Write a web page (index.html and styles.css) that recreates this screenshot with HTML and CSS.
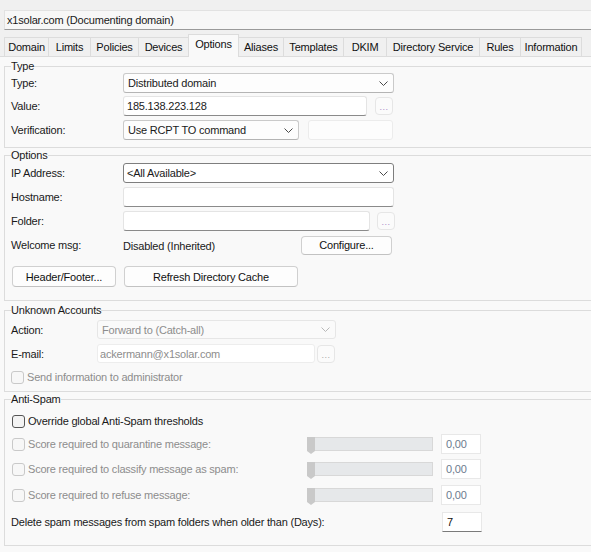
FILE: index.html
```html
<!DOCTYPE html>
<html lang="en">
<head>
    <meta charset="UTF-8">
    <meta name="viewport" content="width=device-width, initial-scale=1.0">
    <title>x1solar.com - Options</title>
    <link rel="stylesheet" href="styles.css">
</head>
<body>
    <div class="title">x1solar.com (Documenting domain)</div>

    <div class="tabs">
        <div class="tab t-domain">Domain</div>
        <div class="tab t-limits">Limits</div>
        <div class="tab t-policies">Policies</div>
        <div class="tab t-devices">Devices</div>
        <div class="tab t-options active">Options</div>
        <div class="tab t-aliases">Aliases</div>
        <div class="tab t-templates">Templates</div>
        <div class="tab t-dkim">DKIM</div>
        <div class="tab t-dir">Directory Service</div>
        <div class="tab t-rules">Rules</div>
        <div class="tab t-info last">Information</div>
    </div>

    <div class="panel">
        <!-- Type -->
        <fieldset class="group g-type">
            <legend>Type</legend>
            <div class="row">
                <span class="lbl">Type:</span>
                <div class="select w-271">
                    <span>Distributed domain</span>
                    <svg class="chev" width="9" height="5" viewBox="0 0 9 5"><polyline points="0.5,0.5 4.5,4.5 8.5,0.5"/></svg>
                </div>
            </div>
            <div class="row mt3">
                <span class="lbl">Value:</span>
                <div class="input w-244">185.138.223.128</div>
                <div class="dots ml8">...</div>
            </div>
            <div class="row mt4">
                <span class="lbl">Verification:</span>
                <div class="select w-176">
                    <span>Use RCPT TO command</span>
                    <svg class="chev" width="9" height="5" viewBox="0 0 9 5"><polyline points="0.5,0.5 4.5,4.5 8.5,0.5"/></svg>
                </div>
                <div class="input blank w-85 ml9"></div>
            </div>
        </fieldset>

        <!-- Options -->
        <fieldset class="group g-options">
            <legend>Options</legend>
            <div class="row">
                <span class="lbl">IP Address:</span>
                <div class="select focus w-271">
                    <span>&lt;All Available&gt;</span>
                    <svg class="chev" width="9" height="5" viewBox="0 0 9 5"><polyline points="0.5,0.5 4.5,4.5 8.5,0.5"/></svg>
                </div>
            </div>
            <div class="row mt4">
                <span class="lbl">Hostname:</span>
                <div class="input w-271"></div>
            </div>
            <div class="row mt4">
                <span class="lbl">Folder:</span>
                <div class="input w-247"></div>
                <div class="dots ml7">...</div>
            </div>
            <div class="row mt4">
                <span class="lbl">Welcome msg:</span>
                <span class="value">Disabled (Inherited)</span>
                <div class="btn b-configure">Configure...</div>
            </div>
            <div class="row buttons">
                <div class="btn b-header">Header/Footer...</div>
                <div class="btn b-refresh">Refresh Directory Cache</div>
            </div>
        </fieldset>

        <!-- Unknown Accounts -->
        <fieldset class="group g-unknown">
            <legend>Unknown Accounts</legend>
            <div class="row h19">
                <span class="lbl short">Action:</span>
                <div class="select disabled w-239">
                    <span>Forward to (Catch-all)</span>
                    <svg class="chev" width="9" height="5" viewBox="0 0 9 5"><polyline points="0.5,0.5 4.5,4.5 8.5,0.5"/></svg>
                </div>
            </div>
            <div class="row h19 mt5">
                <span class="lbl short">E-mail:</span>
                <div class="input disabled w-218">ackermann@x1solar.com</div>
                <div class="dots gray ml2">...</div>
            </div>
            <div class="row check mt6">
                <span class="cb"></span>
                <span class="dim">Send information to administrator</span>
            </div>
        </fieldset>

        <!-- Anti-Spam -->
        <fieldset class="group g-spam">
            <legend>Anti-Spam</legend>
            <div class="row check">
                <span class="cb on"></span>
                <span>Override global Anti-Spam thresholds</span>
            </div>
            <div class="row mt5">
                <div class="score">
                    <span class="cb"></span>
                    <span class="dim">Score required to quarantine message:</span>
                </div>
                <div class="track"><div class="thumb"></div></div>
                <div class="num">0,00</div>
            </div>
            <div class="row mt5">
                <div class="score">
                    <span class="cb"></span>
                    <span class="dim">Score required to classify message as spam:</span>
                </div>
                <div class="track"><div class="thumb"></div></div>
                <div class="num">0,00</div>
            </div>
            <div class="row mt6">
                <div class="score">
                    <span class="cb"></span>
                    <span class="dim">Score required to refuse message:</span>
                </div>
                <div class="track"><div class="thumb"></div></div>
                <div class="num">0,00</div>
            </div>
            <div class="row mt7">
                <span class="lbl long">Delete spam messages from spam folders when older than (Days):</span>
                <div class="num edit">7</div>
            </div>
        </fieldset>
    </div>
</body>
</html>
```

FILE: styles.css
```css
html, body {
    height: 100%;
    overflow: hidden;
}
body {
    margin: 0;
    background: #f0f0f0;
    font-family: "Liberation Sans", Arial, sans-serif;
    font-size: 11px;
    letter-spacing: -0.2px;
    color: #1a1a1a;
}

/* title box */
.title {
    margin: 10px 0 0 4px;
    height: 20px;
    box-sizing: border-box;
    padding-left: 2px;
    line-height: 18px;
    background: #f7f7f7;
    border: 1px solid #e2e2e2;
    border-right: none;
    border-bottom-color: #9a9a9a;
}

/* tabs */
.tabs {
    display: flex;
    align-items: flex-end;
    height: 21px;
    margin: 5px 0 0 4px;
}
.tab {
    box-sizing: border-box;
    height: 19px;
    line-height: 18px;
    text-align: center;
    border-top: 1px solid #dcdcdc;
    border-left: 1px solid #dcdcdc;
    background: #f0f0f0;
    color: #111;
}
.tab.last {
    border-right: 1px solid #dcdcdc;
}
.tab.active {
    height: 23px;
    line-height: 19px;
    padding-bottom: 3px;
    margin-bottom: -1px;
    border-right: 1px solid #dcdcdc;
    background: #f9f9f9;
    z-index: 1;
}
.tab.active + .tab {
    border-left: none;
}
.t-domain { width: 44px; }
.t-limits { width: 42px; }
.t-policies { width: 48px; }
.t-devices { width: 50px; }
.t-options { width: 51px; }
.t-aliases { width: 44px; }
.t-templates { width: 60px; }
.t-dkim { width: 43px; }
.t-dir { width: 93px; }
.t-rules { width: 41px; }
.t-info { width: 62px; }

/* page */
.panel {
    height: 496px;
    box-sizing: border-box;
    padding: 2px 0 0 4px;
    background: #f9f9f9;
    border-top: 1px solid #dcdcdc;
    overflow: hidden;
}
.group {
    width: 640px;
    margin: 0;
    padding: 0 0 7px 6px;
    border: 1px solid #dcdcdc;
    min-inline-size: 0;
}
.group legend {
    padding: 0;
    line-height: 14px;
    color: #1a1a1a;
}
.g-options { padding-top: 1px; padding-bottom: 13px; }
.g-unknown { margin-top: 2px; padding-top: 3px; padding-bottom: 6px; }
.g-spam { padding-top: 7px; padding-bottom: 13px; }

.row {
    display: flex;
    align-items: center;
    height: 20px;
}
.row.h19 { height: 19px; }
.row.check { height: 16px; }
.row.buttons { height: 21px; margin-top: 11px; }
.mt3 { margin-top: 3px; }
.mt4 { margin-top: 4px; }
.mt5 { margin-top: 5px; }
.mt6 { margin-top: 6px; }
.mt7 { margin-top: 7px; }
.ml2 { margin-left: 2px; }
.ml7 { margin-left: 7px; }
.ml8 { margin-left: 8px; }
.ml9 { margin-left: 9px; }

.lbl {
    width: 112px;
    flex: none;
}
.lbl.short { width: 86px; }
.lbl.long { width: 431px; }
.value {
    width: 178px;
    flex: none;
    padding-top: 1px;
}

/* controls */
.select, .input {
    display: flex;
    align-items: center;
    box-sizing: border-box;
    height: 100%;
    border-radius: 3px;
    white-space: nowrap;
}
.select {
    justify-content: space-between;
    padding: 0 5px 0 4px;
    background: #fdfdfd;
    border: 1px solid #cacaca;
    border-bottom-color: #b4b4b4;
}
.select.focus {
    padding-left: 3px;
    border-color: #7e7e7e;
    background: #fff;
}
.select.disabled {
    background: #fafafa;
    border-color: #e6e6e6;
    color: #8d8d8d;
}
.chev {
    fill: none;
    stroke: #4a4a4a;
    stroke-width: 1;
}
.select.disabled .chev {
    stroke: #b8b8b8;
}
.input {
    padding: 0 3px;
    background: #fff;
    border: 1px solid #e4e4e4;
    border-bottom-color: #8a8a8a;
}
.input.blank {
    background: #fdfdfd;
    border-color: #ececec;
}
.input.disabled {
    border-color: #ededed;
    color: #8d8d8d;
    padding-left: 2px;
}
.dots {
    box-sizing: border-box;
    width: 18px;
    height: 18px;
    flex: none;
    border: 1px solid #e6e6e6;
    border-radius: 4px;
    background: #fbfbfb;
    color: #a98cc8;
    font-size: 9px;
    letter-spacing: 0.5px;
    text-align: center;
    line-height: 18px;
}
.dots.gray { color: #a8a8a8; }

.w-85 { width: 85px; }
.w-176 { width: 176px; }
.w-218 { width: 218px; }
.w-239 { width: 239px; }
.w-244 { width: 244px; }
.w-247 { width: 247px; }
.w-271 { width: 271px; }

.btn {
    box-sizing: border-box;
    height: 100%;
    border: 1px solid #d0d0d0;
    border-bottom-color: #c2c2c2;
    border-radius: 4px;
    background: #fdfdfd;
    color: #111;
    text-align: center;
    display: flex;
    align-items: center;
    justify-content: center;
}
.b-configure { width: 91px; height: 19px; }
.b-header { width: 104px; margin-left: 1px; }
.b-refresh { width: 174px; margin-left: 8px; }

/* checkboxes */
.cb {
    box-sizing: border-box;
    width: 13px;
    height: 13px;
    flex: none;
    margin-right: 3px;
    border: 1px solid #c9c9c9;
    border-radius: 3px;
    background: #f7f7f7;
}
.cb.on {
    border-color: #555;
    background: #f3f3f3;
}
.g-spam .cb { margin-left: 1px; }
.dim { color: #8d8d8d; }

/* anti-spam rows */
.score {
    display: flex;
    align-items: center;
    width: 296px;
    flex: none;
    white-space: nowrap;
}
.track {
    box-sizing: border-box;
    width: 126px;
    height: 14px;
    flex: none;
    background: #e6e8ea;
    border: 1px solid #d8d8d8;
}
.thumb {
    width: 8px;
    height: 17px;
    margin: -1px 0 0 -1px;
    background: #c9c9c9;
    clip-path: polygon(0 0, 100% 0, 100% 82%, 50% 100%, 0 82%);
}
.num {
    box-sizing: border-box;
    width: 40px;
    height: 20px;
    flex: none;
    margin-left: 8px;
    padding: 0 4px;
    line-height: 18px;
    background: #fff;
    border: 1px solid #e8e8e8;
    color: #6c7b8e;
}
.num.edit {
    margin-left: 0;
    color: #111;
    border-bottom-color: #7a7a7a;
}
```
